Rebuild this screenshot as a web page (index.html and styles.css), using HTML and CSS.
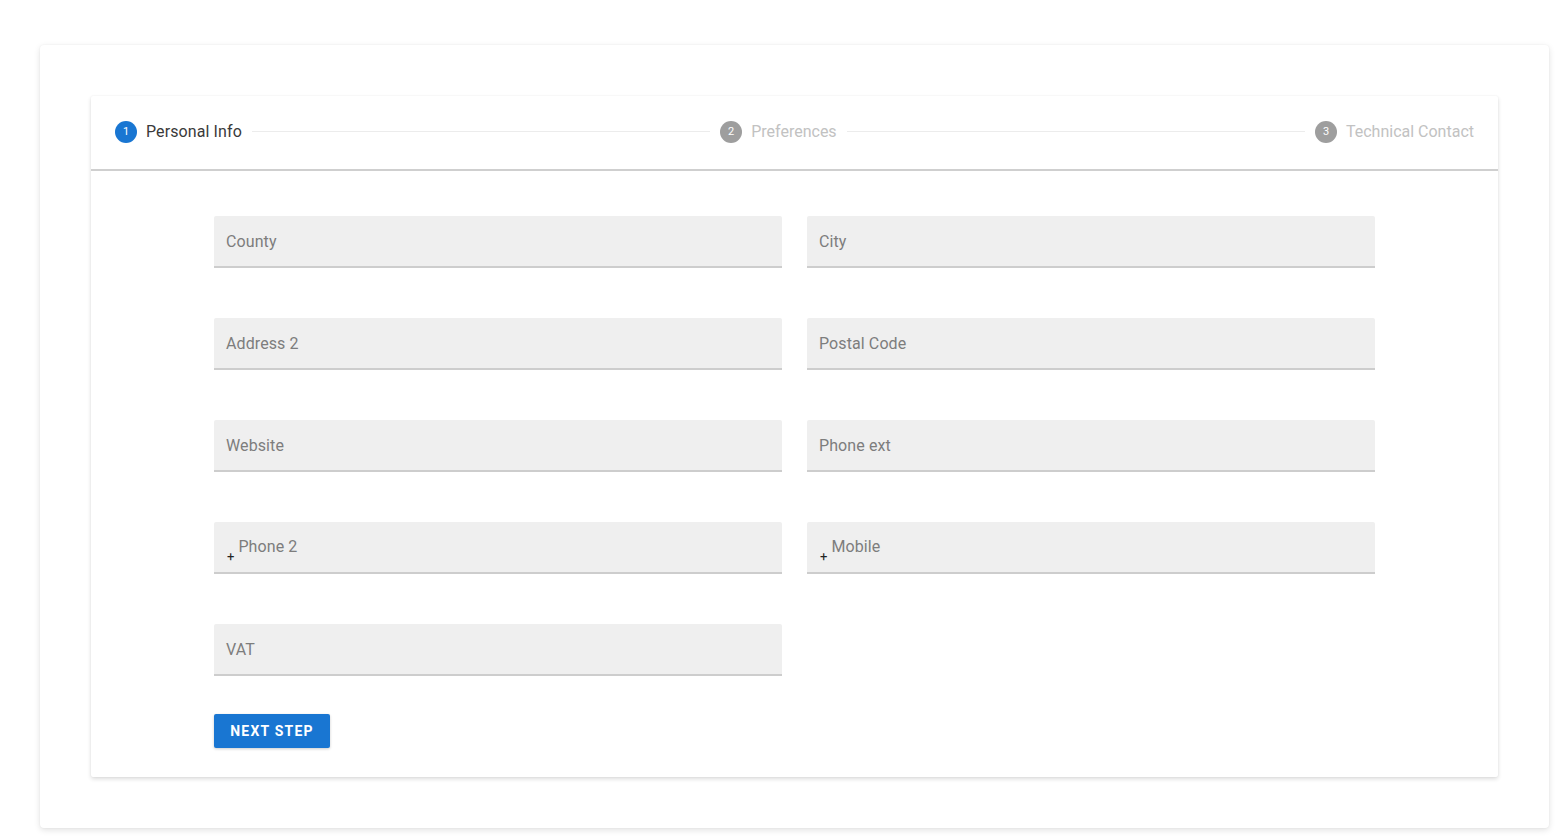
FILE: index.html
```html
<!DOCTYPE html>
<html>
<head>
<meta charset="utf-8">
<link rel="stylesheet" href="styles.css">
</head>
<body>
<div class="outer">
  <div class="card">
    <div class="stepper">
      <div class="step active"><span class="num">1</span><span class="label">Personal Info</span></div>
      <div class="line"></div>
      <div class="step"><span class="num">2</span><span class="label">Preferences</span></div>
      <div class="line"></div>
      <div class="step"><span class="num">3</span><span class="label">Technical Contact</span></div>
    </div>
    <div class="form">
      <div class="grid">
        <div class="field"><span class="ph">County</span></div>
        <div class="field"><span class="ph">City</span></div>
        <div class="field"><span class="ph">Address 2</span></div>
        <div class="field"><span class="ph">Postal Code</span></div>
        <div class="field"><span class="ph">Website</span></div>
        <div class="field"><span class="ph">Phone ext</span></div>
        <div class="field phone"><span class="plus">+</span><span class="ph">Phone 2</span></div>
        <div class="field phone"><span class="plus">+</span><span class="ph">Mobile</span></div>
        <div class="field"><span class="ph">VAT</span></div>
      </div>
      <button class="btn">NEXT STEP</button>
    </div>
  </div>
</div>
</body>
</html>
```

FILE: styles.css
```css
* { box-sizing: border-box; }
html, body { margin: 0; padding: 0; background: #ffffff; }
body {
  font-family: Roboto, "Liberation Sans", Arial, sans-serif;
  padding: 45px 15px 9px 40px;
}
.outer {
  width: 1509px;
  height: 783px;
  background: #fff;
  border-radius: 4px;
  box-shadow: 0 2px 6px rgba(0,0,0,0.12), 0 0 2px rgba(0,0,0,0.05);
  padding: 51px;
}
.card {
  width: 1407px;
  height: 681px;
  background: #fff;
  border-radius: 2px;
  box-shadow: 0 2px 4px rgba(0,0,0,0.14), 0 0 2px rgba(0,0,0,0.06);
}
.stepper {
  height: 75px;
  display: flex;
  align-items: center;
  padding: 0 24px 2px 24px;
  border-bottom: 2px solid #cfcfcf;
}
.step {
  display: flex;
  align-items: center;
  flex: none;
}
.num {
  width: 22px;
  height: 22px;
  border-radius: 50%;
  background: #9e9e9e;
  color: #fff;
  font-size: 11px;
  display: flex;
  align-items: center;
  justify-content: center;
  margin-right: 9px;
}
.step.active .num { background: #1976d2; }
.label {
  font-size: 16px;
  color: #c2c2c2;
  letter-spacing: 0;
}
.step.active .label { color: #3a3a3a; letter-spacing: 0.1px; }
.line {
  flex: 1;
  height: 1px;
  background: #ececec;
  margin: 0 10px;
}
.form {
  padding: 45px 0 0 123px;
}
.grid {
  width: 1161px;
  display: grid;
  grid-template-columns: 568px 568px;
  column-gap: 25px;
  row-gap: 50px;
}
.field {
  height: 52px;
  background: #efefef;
  border-bottom: 2px solid #cdcdcd;
  border-radius: 2px 2px 0 0;
  display: flex;
  align-items: center;
  padding: 0 12px;
}
.ph {
  font-size: 16px;
  color: #7d7d7d;
  letter-spacing: 0.1px;
}
.phone .plus {
  font-size: 13px;
  color: #222;
  margin-right: 5px;
  position: relative;
  top: 9px;
  left: 1px;
}
.phone .ph { position: relative; top: -1px; }
.btn {
  margin-top: 38px;
  width: 116px;
  height: 34px;
  border: none;
  border-radius: 2px;
  background: #1976d2;
  color: #fff;
  font-family: Roboto, "Liberation Sans", Arial, sans-serif;
  font-weight: 700;
  font-size: 14px;
  letter-spacing: 1.2px;
  box-shadow: 0 1px 3px rgba(0,0,0,0.2);
  padding: 0;
}
```
